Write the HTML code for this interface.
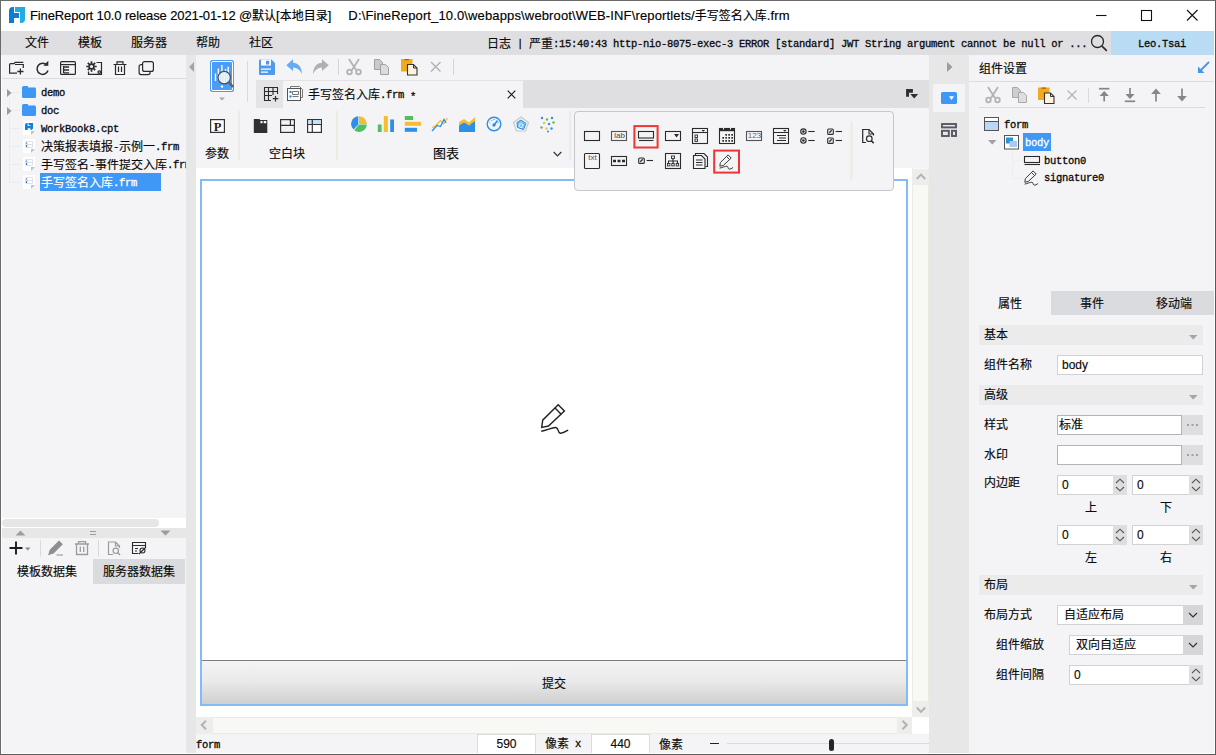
<!DOCTYPE html>
<html lang="zh-CN">
<head>
<meta charset="utf-8">
<title>FineReport 10.0</title>
<style>
html,body{margin:0;padding:0}
body{width:1216px;height:755px;position:relative;overflow:hidden;background:#f4f4f6;
 font-family:"Liberation Sans","Noto Sans CJK SC",sans-serif;font-size:12px;color:#1c1c1c;line-height:1}
.a{position:absolute}
.a svg{display:block}
.t{position:absolute;white-space:nowrap;font-size:12px;line-height:14px;height:14px;color:#0a0a0a;-webkit-text-stroke:0.15px}
.m{font-family:"Liberation Mono","Noto Sans CJK SC",monospace}
.m i,.l{font-family:"Liberation Mono",monospace;font-style:normal;font-size:10.5px;letter-spacing:-0.3px;position:relative;top:-1px;font-weight:normal;-webkit-text-stroke:0.3px}
#ttl .c{font-size:12px;letter-spacing:0}
#t1a{letter-spacing:-0.12px}
#t2{letter-spacing:0.14px}
.hl{background:#3f98f6;color:#fff}
.sec{position:absolute;left:979px;width:224px;height:20px;background:#ebebec}
.inp{position:absolute;background:#fff;border:1px solid #d2d2d4;box-sizing:border-box}
.btn{position:absolute;background:#dedee0}
</style>
</head>
<body>
<!-- ===== title bar ===== -->
<div class="a" id="titlebar" style="left:0;top:0;width:1216px;height:31px;background:#fff">
<svg class="a" style="left:9px;top:7px" width="16" height="16" viewBox="0 0 16 16"><path d="M0 16V4a4 4 0 0 1 4-4h1v6h5v5H5v5z" fill="#0b7dd8"/><path d="M6 0h10v12a4 4 0 0 1-4 4h-1V5H6z" fill="#23abe6"/></svg>
<div class="t" id="ttl" style="left:30px;top:8px;font-size:13px;line-height:16px;height:16px;color:#000"><span id="t1"><span id="t1a">FineReport 10.0 release 2021-01-12 @</span><span class="c">默认</span>[<span class="c">本地目录</span>]</span><span style="display:inline-block;width:17px"></span><span id="t2">D:\FineReport_10.0\webapps\webroot\WEB-INF\reportlets/<span class="c">手写签名入库</span>.frm</span></div>
<svg class="a" style="left:1090px;top:5px" width="116" height="21" viewBox="0 0 116 21" fill="none" stroke="#111" stroke-width="1.1"><path d="M6 10.5h10.5"/><rect x="51.5" y="5.5" width="10" height="10"/><path d="M97 5l10.5 10.5M107.500 5L97 15.500"/></svg>
</div>
<!-- ===== menubar ===== -->
<div class="a" id="menubar" style="left:0;top:31px;width:1216px;height:24px;background:#dfdfe1;z-index:2">
<div class="t" style="left:25px;top:5px">文件</div>
<div class="t" style="left:78px;top:5px">模板</div>
<div class="t" style="left:131px;top:5px">服务器</div>
<div class="t" style="left:196px;top:5px">帮助</div>
<div class="t" style="left:249px;top:5px">社区</div>
<div class="t m" id="log" style="left:487px;top:7px">日志<i>&nbsp;|&nbsp;</i>严重<i>:15:40:43 http-nio-8075-exec-3 ERROR [standard] JWT String argument cannot be null or ...</i></div>
<svg class="a" style="left:1090px;top:3px" width="18" height="18" viewBox="0 0 18 18" fill="none" stroke="#2a2a2a" stroke-width="1.3"><circle cx="7.500" cy="7.500" r="6"/><path d="M11.800 11.800l5 5" stroke-width="1.700"/></svg>
<div class="a" style="left:1111px;top:0;width:104px;height:24px;background:#b9dcf4"></div>
<div class="t m" style="left:1138px;top:7px"><i>Leo.Tsai</i></div>
</div>
<!-- ===== left panel ===== -->
<div class="a" id="left" style="left:0;top:54px;width:186px;height:701px;background:#f4f4f6">
<!-- toolbar icons (coords relative to panel: y-54) -->
<svg class="a" style="left:7px;top:5px" width="150" height="18" viewBox="0 0 150 18" fill="none" stroke="#2b2b2b" stroke-width="1.2">
 <!-- new folder -->
 <path d="M10 14.100H2.600V5.600a1 1 0 0 1 1-1H7l1.200-1.300h8.100"/><path d="M8 5.500h8.300V9"/><path d="M13.400 9.400v6.200M10.300 12.500h6.200" stroke-width="1.300"/>
 <!-- refresh -->
 <path d="M40 6.200A5.600 5.600 0 1 0 41 11.500" stroke-width="1.500"/><path d="M41.300 1.800v4.900h-4.900z" fill="#2b2b2b" stroke="none"/>
 <!-- template tree -->
 <rect x="53.600" y="2.600" width="14.800" height="12.800" rx="1"/><path d="M53.600 5.600h14.800"/><path d="M56.600 7v7M56.600 8h5.500M56.600 11h5.500M56.600 13.800h5.500" stroke-width="1.300"/>
 <!-- gear box -->
 <path d="M81.500 12.500v2.800h13V3.500h-5"/><circle cx="84.500" cy="7.500" r="2.400" stroke-width="1.600"/><path d="M84.500 2.300v2.400M84.500 10.300v2.400M79.300 7.500h2.400M87.300 7.500h2.400M80.800 3.800l1.700 1.700M86.500 9.500l1.700 1.700M80.800 11.200l1.700-1.700M86.500 5.500l1.700-1.700" stroke-width="1.700"/><circle cx="92.300" cy="13.100" r="1.300"/>
 <!-- trash -->
 <path d="M106.500 5.500h13M110 5.500V2.800h6v2.700M108.500 5.500v10h9v-10M111.500 7.500v5.500M114.500 7.500v5.500"/>
 <!-- copy -->
 <rect x="135.600" y="2.600" width="10.800" height="9.800" rx="2"/><path d="M135.500 5.600h-1.400a2 2 0 0 0-2 2v6a2 2 0 0 0 2 2h7a2 2 0 0 0 2-2v-1.200"/>
</svg>
<div class="a" style="left:1px;top:24px;width:185px;height:1px;background:#dcdcde"></div>
<div class="a" style="left:9px;top:44px;width:1px;height:85px;background:#ebebee"></div>
<div class="a" style="left:9px;top:38px;width:11px;height:1px;background:#ebebee"></div>
<div class="a" style="left:9px;top:56px;width:11px;height:1px;background:#ebebee"></div>
<div class="a" style="left:9px;top:74px;width:11px;height:1px;background:#ebebee"></div>
<div class="a" style="left:9px;top:92px;width:11px;height:1px;background:#ebebee"></div>
<div class="a" style="left:9px;top:110px;width:11px;height:1px;background:#ebebee"></div>
<div class="a" style="left:9px;top:128px;width:11px;height:1px;background:#ebebee"></div>
<!-- tree -->
<svg class="a" style="left:7px;top:35px" width="5" height="8"><path d="M0 0l4.500 4L0 8z" fill="#9a9a9a"/></svg>
<svg class="a" style="left:7px;top:53px" width="5" height="8"><path d="M0 0l4.500 4L0 8z" fill="#9a9a9a"/></svg>
<svg class="a" style="left:22px;top:32px" width="14" height="12"><path d="M0 1.500A1.500 1.500 0 0 1 1.500 0h4l1.500 1.500h5.500A1.500 1.500 0 0 1 14 3v7.500a1.500 1.500 0 0 1-1.500 1.500h-11A1.500 1.500 0 0 1 0 10.500z" fill="#3f97f5"/><path d="M6 1.500h7" stroke="#8cc3fb" stroke-width="1"/></svg>
<svg class="a" style="left:22px;top:50px" width="14" height="12"><path d="M0 1.500A1.500 1.500 0 0 1 1.500 0h4l1.500 1.500h5.500A1.500 1.500 0 0 1 14 3v7.500a1.500 1.500 0 0 1-1.500 1.500h-11A1.500 1.500 0 0 1 0 10.500z" fill="#3f97f5"/><path d="M6 1.500h7" stroke="#8cc3fb" stroke-width="1"/></svg>
<div class="t m" style="left:41px;top:33px"><i>demo</i></div>
<div class="t m" style="left:41px;top:51px"><i>doc</i></div>
<svg class="a" style="left:23px;top:67px" width="12" height="14"><path d="M0 0h12v10l-4 4H0z" fill="#fff"/><path d="M12 10l-4 4v-4z" fill="#c2c2c4"/><path d="M2 9V4a2 2 0 0 1 2-2h.700v3h2.600v2.200H4.700V9zM5.500 2H10v5a2 2 0 0 1-2 2h-.600V4.300H5.500z" fill="#0f80da"/></svg>
<div class="t m" style="left:41px;top:69px"><i>WorkBook8.cpt</i></div>
<svg class="a" style="left:23px;top:85px" width="12" height="14"><path d="M0 0h12v10l-4 4H0z" fill="#fff"/><path d="M12 10l-4 4v-4z" fill="#c2c2c4"/><path d="M2.500 2.500h7v6h-7zM2.500 5.500h7" stroke="#e0e0e3" stroke-width="1" fill="none"/><path d="M3 3.500h1.200v1.200H3zM3 6h1.200v2H3z" fill="#2b83e8"/></svg>
<div class="t m" style="left:41px;top:87px">决策报表填报<i>-</i>示例一<i>.frm</i></div>
<svg class="a" style="left:23px;top:103px" width="12" height="14"><path d="M0 0h12v10l-4 4H0z" fill="#fff"/><path d="M12 10l-4 4v-4z" fill="#c2c2c4"/><path d="M2.500 2.500h7v6h-7zM2.500 5.500h7" stroke="#e0e0e3" stroke-width="1" fill="none"/><path d="M3 3.500h1.200v1.200H3zM3 6h1.200v2H3z" fill="#2b83e8"/></svg>
<div class="t m" style="left:41px;top:105px;width:145px;overflow:hidden">手写签名<i>-</i>事件提交入库<i>.frm</i></div>
<svg class="a" style="left:23px;top:121px" width="12" height="14"><path d="M0 0h12v10l-4 4H0z" fill="#fff"/><path d="M12 10l-4 4v-4z" fill="#c2c2c4"/><path d="M2.500 2.500h7v6h-7zM2.500 5.500h7" stroke="#e0e0e3" stroke-width="1" fill="none"/><path d="M3 3.500h1.200v1.200H3zM3 6h1.200v2H3z" fill="#2b83e8"/></svg>
<div class="a hl" style="left:40px;top:119px;width:121px;height:18px"></div>
<div class="t m" style="left:41px;top:123px;color:#fff">手写签名入库<i>.frm</i></div>
<!-- h scrollbar -->
<div class="a" style="left:1px;top:464px;width:185px;height:10px;background:#fff"></div>
<div class="a" style="left:2px;top:465px;width:157px;height:8px;border-radius:4px;background:#e6e6e7"></div>
<!-- splitter -->
<div class="a" style="left:1px;top:474px;width:185px;height:10px;background:#e7e7e8"></div>
<svg class="a" style="left:15px;top:476px" width="160" height="6"><path d="M0.500 5.500l5-5 5 5zM145.500 0.500h10l-5 5z" fill="#9c9c9c"/><path d="M75 1.500h6M75 4.500h6" stroke="#9c9c9c" stroke-width="1"/></svg>
<!-- dataset toolbar -->
<svg class="a" style="left:7px;top:485px" width="142" height="18" viewBox="0 0 142 18" fill="none">
 <path d="M9 2.500v13M2.500 9h13" stroke="#1c1c1c" stroke-width="1.900"/><path d="M18 8.500h5.500L20.750 11.500z" fill="#8a8a8a"/>
 <path d="M33.500 1.500v16M91.500 1.500v16" stroke="#d8d8da" stroke-width="1"/>
 <path d="M42 15.300l1.300-4.300 8.700-8.700 3 3-8.700 8.700zM49.500 16h6.500" stroke="#8e8e90" stroke-width="1.200" fill="#8e8e90"/>
 <path d="M68 5h14M71.500 5V2.700h7V5M69.500 5v10.500h11V5M73.300 7.500v5.500M76.700 7.500v5.500" stroke="#9c9c9e" stroke-width="1.300"/>
 <path d="M112.500 9V7l-4-4h-7v12.500h4.500M108.500 3v4h4" stroke="#9a9a9c" stroke-width="1.200"/><circle cx="108.800" cy="11.800" r="2.700" stroke="#9a9a9c" stroke-width="1.200"/><path d="M110.800 13.800l2.200 2.200" stroke="#9a9a9c" stroke-width="1.400"/>
 <path d="M138.500 8V3.500h-13v11h6M125.500 6.500h13M128 9.500h3M128 12h2" stroke="#2b2b2b" stroke-width="1.100"/><circle cx="135.500" cy="11.500" r="2.500" stroke="#2b2b2b" stroke-width="1.100"/><path d="M132 15l7-7" stroke="#2b2b2b" stroke-width="1.100"/>
</svg>
<!-- dataset tabs -->
<div class="a" style="left:93px;top:505px;width:92px;height:25px;background:#dadbde"></div>
<div class="t" style="left:17px;top:511px">模板数据集</div>
<div class="t" style="left:103px;top:511px">服务器数据集</div>
</div>
<!-- splitter -->
<div class="a" id="split" style="left:186px;top:54px;width:10px;height:701px;background:#e7e7e8"><svg class="a" style="left:3px;top:8px" width="5" height="10"><path d="M5 0v10L0 5z" fill="#a4a4a6"/></svg></div>
<!-- ===== centre ===== -->
<div class="a" id="centre" style="left:196px;top:54px;width:733px;height:701px;background:#f4f4f6">
<!-- big icon -->
<svg class="a" style="left:14px;top:6px" width="26" height="44" viewBox="0 0 26 44">
 <rect x="0" y="0" width="24" height="32" rx="2.500" fill="#4a9cf5"/><rect x="1.500" y="1.500" width="21" height="29" rx="1.500" fill="none" stroke="#fff" stroke-width="1"/>
 <path d="M5.500 13.500V21M8.400 8.400V20M11.900 5v17M15.500 9v11M18.200 6.700V19" stroke="#fff" stroke-width="1.400"/><circle cx="12" cy="26.500" r="1.200" fill="#fff"/>
 <circle cx="14.200" cy="17.600" r="6.200" fill="#f2f7fd" stroke="#4a4e55" stroke-width="1.300"/><path d="M10.500 14v7M12.800 12.500v10M15.500 12.500v10M17.800 14v7" stroke="#d4e6fb" stroke-width="1.200"/><path d="M19 22.500l3.600 3.800" stroke="#5d6168" stroke-width="2.400" stroke-linecap="round"/>
 <path d="M9 37.500h6L12 40.500z" fill="#a8a8aa"/>
</svg>
<div class="a" style="left:51px;top:7px;width:1px;height:41px;background:#dadadc"></div>
<!-- file toolbar -->
<svg class="a" style="left:60px;top:3px" width="200" height="20" viewBox="0 0 200 20" fill="none">
 <path d="M4.200 2.500h11.300l3.500 3.500v10.800a1.200 1.200 0 0 1-1.200 1.200H4.200A1.200 1.200 0 0 1 3 16.800V3.700a1.200 1.200 0 0 1 1.200-1.200z" fill="#4f9aec"/><rect x="5" y="2.500" width="10" height="6" fill="#fff"/><rect x="10" y="3.800" width="3.200" height="3.700" fill="#4f9aec"/><path d="M5 12.200h10M5 15.200h7" stroke="#fff" stroke-width="1.300"/>
 <path d="M30.300 8.200L37 2.200V5.800C42 6 45.500 9.500 46 17 44 13 41 10.800 37 10.500V14z" fill="#67acf3"/>
 <path d="M72.800 8.200L66 2.200V5.800C61 6 57.500 9.500 57 17 59 13 62 10.800 66 10.500V14z" fill="#b0b0b2"/>
 <path d="M82.500 2v16M197.500 2v16" stroke="#d6d6d8" stroke-width="1"/>
 <g transform="translate(0,-1)">
 <g stroke="#b2b2b4" stroke-width="1.800"><path d="M93 3l7 11M103 3l-7 11"/><circle cx="93.500" cy="16" r="2.300"/><circle cx="102.500" cy="16" r="2.300"/></g>
 <g stroke="#a0a0a2" stroke-width="1" fill="#c9c9cb"><path d="M118.500 3.500h5l3 3v7h-8z"/><path d="M124.500 8.500h5l3 3v7h-8z" fill="#dcdcde"/></g>
 <rect x="145" y="3" width="11.500" height="12.500" fill="#f2a91c"/><rect x="148.500" y="3" width="4.500" height="1.200" fill="#b4542a"/><path d="M151.500 8.500h6l3.500 3.500V19h-9.500z" fill="#fff4de" stroke="#333" stroke-width="1.100"/><path d="M157.500 8.500v3.500h3.500" stroke="#333" stroke-width="1" fill="none"/>
 <path d="M175 6l9.500 9.500M184.500 6L175 15.500" stroke="#b0b0b2" stroke-width="1.400"/></g>
</svg>
<!-- tab row -->
<div class="a" style="left:60px;top:26px;width:673px;height:28px;background:#dfdfe1"></div>
<div class="a" style="left:60px;top:26px;width:27px;height:28px;background:#e4e4e6"></div>
<div class="a" style="left:87px;top:26px;width:240px;height:28px;background:#f4f4f6"></div>
<div class="a" style="left:60px;top:26px;width:267px;height:1px;background:#e2e2e4"></div>
<svg class="a" style="left:67px;top:32px" width="16" height="16" viewBox="0 0 16 16" fill="none" stroke="#2b2b2b" stroke-width="1.100"><path d="M14.500 8V1.500h-13v13H8M1.500 5.500h13M1.500 9.500H9M5.500 1.500v13M10 1.500V9"/><path d="M12.500 10v5.500M9.800 12.700h5.500" stroke-width="1.200"/></svg>
<svg class="a" style="left:91px;top:32px" width="16" height="16" viewBox="0 0 16 16" fill="none"><path d="M3.500 2.500v-2h9l3 3v8h-2" stroke="#777" stroke-width="1"/><rect x=".5" y="2.500" width="13" height="12" fill="#fafafa" stroke="#555" stroke-width="1"/><path d="M5.500 5.500h6v3h-6zM5.500 10.500h6" stroke="#777" stroke-width="1"/><path d="M2.500 5h2v2h-2zM2.500 9.500h2v2h-2z" fill="#2b7de0"/></svg>
<div class="t m" style="left:112px;top:35px">手写签名入库<i>.frm <span style="position:relative;top:2px">*</span></i></div>
<svg class="a" style="left:311px;top:36px" width="9" height="9"><path d="M.7.700l7.600 7.600M8.300.700L.7 8.300" stroke="#1c1c1c" stroke-width="1.200"/></svg>
<svg class="a" style="left:709px;top:34px" width="14" height="12"><path d="M1.100 1.100h6.800v3.600H4v4H1.100z" fill="#2e2e2e"/><path d="M5.300 6.100h7.800l-3.900 4.500z" fill="#2e2e2e"/></svg>
<!-- widget toolbar -->
<svg class="a" style="left:14px;top:64px" width="16" height="16" viewBox="0 0 16 16"><rect x=".6" y="1.600" width="13.800" height="12.800" fill="#fff" stroke="#333" stroke-width="1.200"/><text x="7.500" y="12.500" text-anchor="middle" font-family="Liberation Serif,serif" font-weight="bold" font-size="12.500" fill="#222">P</text></svg>
<div class="t" style="left:9px;top:93px">参数</div>
<div class="a" style="left:42px;top:57px;width:2px;height:49px;background:#eceae2"></div>
<svg class="a" style="left:57px;top:64px" width="72" height="16" viewBox="0 0 72 16" fill="none">
 <path d="M.8 1h6v1h7.500v13H.8z" fill="#303030"/><path d="M7.500 3h2v2.300h-2zM10.700 3h2.600v2.300h-2.600z" fill="#fff"/>
 <rect x="27.600" y="1.600" width="13.800" height="12.800" stroke="#333" stroke-width="1.200"/><path d="M27.600 7.300h13.800M37.400 1.600v5.700" stroke="#333" stroke-width="1.200"/>
 <rect x="54.600" y="1.600" width="13.800" height="12.800" fill="#fff" stroke="#333" stroke-width="1.200"/><rect x="55.200" y="2.200" width="12.600" height="3.800" fill="#bfe4f7"/><path d="M54.600 6.500h13.800M59.300 1.600v12.800" stroke="#333" stroke-width="1.200"/>
</svg>
<div class="t" style="left:73px;top:93px">空白块</div>
<div class="a" style="left:140px;top:57px;width:2px;height:49px;background:#eceae2"></div>
<!-- chart icons -->
<svg class="a" style="left:154px;top:60px" width="210" height="20" viewBox="0 0 210 20" fill="none">
 <path d="M9 2.200A7.800 7.800 0 0 1 16.800 10H9z" fill="#f5bd31"/><path d="M16.800 10.600A7.800 7.800 0 0 1 4.200 16.200L9 10.600z" fill="#52c05a"/><path d="M8.300 2.200v8.200L3.600 15.600A7.800 7.800 0 0 1 8.300 2.200z" fill="#2c8fe8"/>
 <path d="M27.800 10.500h3.800V18h-3.800z" fill="#52c05a"/><path d="M33.800 2h4v16h-4z" fill="#f5bd31"/><path d="M40.200 5.500h3.800V18h-3.800z" fill="#2c8fe8"/>
 <path d="M54.800 2h8.200v4h-8.200z" fill="#52c05a"/><path d="M54.800 7.800H71v4H54.800z" fill="#f5bd31"/><path d="M54.800 13.800H67v4H54.800z" fill="#2c8fe8"/>
 <path d="M82 13.500l4-2 4.500-5 3 3.500L97.500 4" stroke="#f5bd31" stroke-width="1.300"/><path d="M82 17l5-5.500 3.500 1L94 5.500l2 3.500" stroke="#2c8fe8" stroke-width="1.300"/>
 <path d="M109 8l5-3 5 3.500 6-5.500v8h-16z" fill="#f5bd31"/><path d="M109 11.500l5-3 5 3 6-4.500v11h-16z" fill="#2c8fe8"/>
 <circle cx="144" cy="10" r="6.800" stroke="#2c8fe8" stroke-width="1.400"/><circle cx="144" cy="11" r="1.700" fill="#2c8fe8"/><path d="M144.500 10.500l3-4" stroke="#2c8fe8" stroke-width="1.500"/><path d="M139.500 8.500l.8.500M141.500 6l.5.800M144 5v1M148.500 8.500l-.8.500" stroke="#2c8fe8" stroke-width="1"/>
 <path d="M171 3l7.500 5.500-3 8.500h-9l-3-8.500z" stroke="#c9c9cb" stroke-width="1.200"/><path d="M171 6l5 3.500-2.500 6-6-2-.5-5z" fill="#7cc4f3" stroke="#2c8fe8" stroke-width="1"/><path d="M171 9.500l2 1.500-1 2.500h-2l-1-2.500z" stroke="#fff" stroke-width=".7"/>
 <g><circle cx="192" cy="4" r="1.200" fill="#2c8fe8"/><circle cx="197" cy="5.500" r="1.200" fill="#52c05a"/><circle cx="202" cy="4" r="1.200" fill="#2c8fe8"/><circle cx="194" cy="9" r="1.200" fill="#f5bd31"/><circle cx="199" cy="10" r="1.200" fill="#2c8fe8"/><circle cx="203.500" cy="8.500" r="1.200" fill="#52c05a"/><circle cx="191.500" cy="13.500" r="1.200" fill="#52c05a"/><circle cx="196.500" cy="14.500" r="1.200" fill="#f5bd31"/><circle cx="201.500" cy="14.500" r="1.200" fill="#2c8fe8"/><circle cx="198" cy="17.500" r="1" fill="#2c8fe8"/></g>
</svg>
<div class="t" style="left:237px;top:93px;font-size:13px">图表</div>
<svg class="a" style="left:357px;top:97px" width="9" height="7"><path d="M.7 1l3.800 4L8.300 1" fill="none" stroke="#333" stroke-width="1.200"/></svg>
<div class="a" style="left:373px;top:57px;width:2px;height:49px;background:#eceae2"></div>
<!-- design area -->
<div class="a" style="left:0;top:114px;width:716px;height:550px;background:#fff"></div>
<div class="a" style="left:4px;top:125px;width:708px;height:527px;box-sizing:border-box;border:2px solid #84bbf7;background:#fff"></div>
<div class="a" style="left:6px;top:606px;width:704px;height:44px;background:linear-gradient(#f4f4f4,#eaeaea 45%,#cfcfd0);border-top:1px solid #7d7d7d;box-sizing:border-box"></div>
<div class="t" style="left:346px;top:623px">提交</div>
<svg class="a" style="left:344px;top:349px" width="30" height="32" viewBox="0 0 30 32" fill="none" stroke="#222" stroke-width="1.400" stroke-linejoin="miter"><path d="M18.200 1.800l6.200 6.300L8.500 23 1.700 24.400l1-7.200z"/><path d="M15 5l6.200 6.200"/><path d="M1.200 28.200c6-1 11-4 14.500-3.700 3.500.5 1.500 5 4.500 5.700 2.500.4 5-1.400 8-3.200"/></svg>
<!-- v scrollbar -->
<div class="a" style="left:716px;top:114px;width:17px;height:549px;background:#f8f8f5;border-left:1px solid #ece9dd;border-right:1px solid #ece9dd;box-sizing:border-box"></div>
<div class="a" style="left:716px;top:115px;width:17px;height:16px;background:#ededeb"></div>
<div class="a" style="left:716px;top:647px;width:17px;height:16px;background:#ededeb"></div>
<svg class="a" style="left:720px;top:119px" width="10" height="8"><path d="M.8 6l4.200-4.300L9.200 6" fill="none" stroke="#b2b2b2" stroke-width="1.900"/></svg>
<svg class="a" style="left:720px;top:652px" width="10" height="8"><path d="M.8 1.500l4.200 4.300 4.200-4.300" fill="none" stroke="#b2b2b2" stroke-width="1.900"/></svg>
<!-- h scrollbar -->
<div class="a" style="left:0;top:663px;width:716px;height:17px;background:#f8f8f5;border-top:1px solid #ece9dd;border-bottom:1px solid #ece9dd;box-sizing:border-box"></div>
<div class="a" style="left:0;top:663px;width:17px;height:17px;background:#ededeb"></div>
<div class="a" style="left:701px;top:663px;width:15px;height:17px;background:#ededeb"></div>
<div class="a" style="left:716px;top:663px;width:17px;height:17px;background:#fff"></div>
<svg class="a" style="left:4px;top:666px" width="8" height="10"><path d="M6 .8L1.700 5 6 9.200" fill="none" stroke="#b2b2b2" stroke-width="1.900"/></svg>
<svg class="a" style="left:705px;top:666px" width="8" height="10"><path d="M1.500 .8L5.800 5 1.500 9.200" fill="none" stroke="#b2b2b2" stroke-width="1.900"/></svg>
<!-- status row -->
<div class="t m" style="left:0px;top:685px"><i>form</i></div>
<div class="inp" style="left:281px;top:680px;width:59px;height:21px;border-color:#dcdcde"></div>
<div class="t" style="left:281px;top:683px;width:59px;text-align:center">590</div>
<div class="t m" style="left:349px;top:684px">像素<i>&nbsp;x</i></div>
<div class="inp" style="left:395px;top:680px;width:59px;height:21px;border-color:#dcdcde"></div>
<div class="t" style="left:395px;top:683px;width:59px;text-align:center">440</div>
<div class="t" style="left:463px;top:684px">像素</div>
<div class="a" style="left:514px;top:689px;width:9px;height:1px;background:#222"></div>
<div class="a" style="left:531px;top:689px;width:202px;height:1px;background:#dadadc"></div>
<div class="a" style="left:633px;top:685px;width:5px;height:12px;border-radius:2.500px;background:#262626"></div>
</div>
<!-- strip -->
<div class="a" id="strip" style="left:929px;top:54px;width:40px;height:701px;background:#e7e7e8">
<svg class="a" style="left:18px;top:8px" width="6" height="10"><path d="M0 0l5.500 5L0 10z" fill="#9c9c9e"/></svg>
<div class="a" style="left:4px;top:30px;width:32px;height:28px;background:#f4f4f6"></div>
<svg class="a" style="left:12px;top:38px" width="16" height="12"><rect width="16" height="12" rx="1.500" fill="#3f97f5"/><path d="M8 4.200h5L10.500 8z" fill="#fff"/></svg>
<svg class="a" style="left:12px;top:69px" width="16" height="14" fill="none" stroke="#575863" stroke-width="1.900"><rect x="1" y="1" width="14" height="3.400"/><rect x="1" y="7.800" width="6.800" height="5.200"/><rect x="11" y="7.800" width="4" height="5.200"/></svg>
</div>
<!-- ===== right panel ===== -->
<div class="a" id="right" style="left:969px;top:54px;width:247px;height:701px;background:#f4f4f6">
<div class="t" style="left:10px;top:8px">组件设置</div>
<svg class="a" style="left:228px;top:7px" width="13" height="13"><path d="M12 1L2.500 10.500" stroke="#3f97f5" stroke-width="1.800"/><path d="M1 5.500V12h6.500z" fill="#3f97f5"/></svg>
<div class="a" style="left:0;top:27px;width:246px;height:1px;background:#dcdcde"></div>
<!-- toolbar -->
<svg class="a" style="left:14px;top:31px" width="210" height="20" viewBox="0 0 210 20" fill="none">
 <g stroke="#b2b2b4" stroke-width="1.800"><path d="M5 2l7 11M15 2L8 13"/><circle cx="5.500" cy="15" r="2.300"/><circle cx="14.500" cy="15" r="2.300"/></g>
 <g stroke="#a8a8aa" stroke-width="1" fill="#cdcdcf"><path d="M29.500 2.500h5l3 3v7h-8z"/><path d="M35.500 7.500h5l3 3v7h-8z" fill="#dededf"/></g>
 <rect x="55" y="2.500" width="11.500" height="12.500" fill="#f2a91c"/><rect x="58.500" y="2.500" width="4.500" height="1.200" fill="#b4542a"/><path d="M61.500 8h6l3.500 3.500V18.500h-9.500z" fill="#fff4de" stroke="#333" stroke-width="1.100"/><path d="M67.500 8v3.500h3.500" stroke="#333" stroke-width="1" fill="none"/>
 <path d="M84.500 5.500l9 9M93.500 5.500l-9 9" stroke="#b4b4b6" stroke-width="1.300"/>
 <path d="M105.500 3v15" stroke="#dadadc" stroke-width="1"/>
 <g stroke="#85858a" stroke-width="1.700" fill="#85858a"><path d="M116 3.700h10.400"/><path d="M121.200 16.500V10"/><path d="M121.200 6l4.600 5h-9.200z" stroke="none"/>
 <path d="M141.800 16.300h10.400"/><path d="M147 3v6"/><path d="M147 14l4.600-5h-9.200z" stroke="none"/>
 <path d="M173 16.500V8"/><path d="M173 3.500l4.800 5.500h-9.600z" stroke="none"/>
 <path d="M199 3.500V12"/><path d="M199 16.500l4.800-5.500h-9.600z" stroke="none"/></g>
</svg>
<div class="a" style="left:10px;top:53px;width:226px;height:1px;background:#dcdcde"></div>
<!-- tree -->
<svg class="a" style="left:15px;top:63px" width="16" height="14"><rect x=".5" y=".5" width="14" height="13" fill="#bcd6f5" stroke="#555" stroke-width="1"/><rect x="1" y="1" width="13" height="3.500" fill="#fff"/><path d="M.5 4.500h14" stroke="#555"/></svg>
<div class="t m" style="left:35px;top:65px"><i>form</i></div>
<div class="a" style="left:23px;top:79px;width:1px;height:10px;background:#eeeef0"></div>
<div class="a" style="left:23px;top:88px;width:10px;height:1px;background:#eeeef0"></div>
<svg class="a" style="left:19px;top:86px" width="9" height="5"><path d="M0 0h8.500L4.250 4.500z" fill="#a2a2a4"/></svg>
<svg class="a" style="left:35px;top:81px" width="16" height="15"><rect x=".5" y=".5" width="14" height="13.500" fill="#fff" stroke="#555"/><rect x="2" y="2.500" width="7" height="6" fill="#2f8fd8"/><rect x="5.500" y="6" width="7.500" height="6" fill="#a9c9f0"/></svg>
<div class="a hl" style="left:54px;top:79px;width:28px;height:18px"></div>
<div class="t m" style="left:56px;top:83px;color:#fff"><i>body</i></div>
<div class="a" style="left:43px;top:97px;width:1px;height:28px;background:#eeeef0"></div>
<div class="a" style="left:43px;top:106px;width:10px;height:1px;background:#eeeef0"></div>
<div class="a" style="left:43px;top:124px;width:10px;height:1px;background:#eeeef0"></div>
<svg class="a" style="left:54px;top:101px" width="18" height="11" fill="none" stroke="#2b2b2b" stroke-width="1.100"><rect x="1.500" y="1.500" width="15" height="6"/><path d="M1.500 9.500h15.500"/></svg>
<div class="t m" style="left:75px;top:101px"><i>button0</i></div>
<svg class="a" style="left:55px;top:116px" width="15" height="16" viewBox="0 0 30 32" fill="none" stroke="#333" stroke-width="1.900"><path d="M18.200 1.800l6.200 6.300L8.500 23 1.700 24.400l1-7.200z"/><path d="M15 5l6.200 6.200" stroke-width="1.800"/><path d="M1.200 28.200c6-1 11-4 14.500-3.700 3.500.5 1.500 5 4.500 5.700 2.500.4 5-1.400 8-3.200"/></svg>
<div class="t m" style="left:75px;top:118px"><i>signature0</i></div>
<!-- property tabs -->
<div class="a" style="left:82px;top:237px;width:164px;height:24px;background:#dadbde"></div>
<div class="t" style="left:29px;top:243px">属性</div>
<div class="t" style="left:111px;top:243px">事件</div>
<div class="t" style="left:187px;top:243px">移动端</div>
<!-- properties -->
<div class="sec" style="left:10px;top:271px"></div>
<div class="t" style="left:15px;top:274px">基本</div>
<svg class="a" style="left:220px;top:281px" width="9" height="5"><path d="M0 0h8.500L4.250 4.500z" fill="#a4a4a6"/></svg>
<div class="t" style="left:15px;top:304px">组件名称</div>
<div class="inp" style="left:88px;top:301px;width:146px;height:20px;border-color:#d2d2d4"></div>
<div class="t" style="left:93px;top:304px">body</div>
<div class="sec" style="left:10px;top:331px"></div>
<div class="t" style="left:15px;top:334px">高级</div>
<svg class="a" style="left:220px;top:341px" width="9" height="5"><path d="M0 0h8.500L4.250 4.500z" fill="#a4a4a6"/></svg>
<div class="t" style="left:15px;top:364px">样式</div>
<div class="inp" style="left:88px;top:361px;width:125px;height:20px;border-color:#b4b4b6"></div>
<div class="t" style="left:90px;top:364px">标准</div>
<div class="btn" style="left:213px;top:361px;width:21px;height:20px"></div>
<svg class="a" style="left:218px;top:370px" width="11" height="2"><path d="M0 1h2M4.500 1h2M9 1h2" stroke="#8a8a8c" stroke-width="1.300"/></svg>
<div class="t" style="left:15px;top:394px">水印</div>
<div class="inp" style="left:88px;top:391px;width:125px;height:20px;border-color:#b4b4b6"></div>
<div class="btn" style="left:213px;top:391px;width:21px;height:20px"></div>
<svg class="a" style="left:218px;top:400px" width="11" height="2"><path d="M0 1h2M4.500 1h2M9 1h2" stroke="#8a8a8c" stroke-width="1.300"/></svg>
<div class="t" style="left:15px;top:422px">内边距</div>
<div class="inp" style="left:88px;top:421px;width:70px;height:20px"></div>
<div class="btn" style="left:144px;top:421px;width:14px;height:20px"></div>
<svg class="a" style="left:146px;top:424px" width="10" height="14" fill="none" stroke="#555" stroke-width="1.100"><path d="M1 5l4-3.800L9 5M1 9l4 3.800L9 9"/></svg>
<div class="t" style="left:93px;top:424px">0</div>
<div class="inp" style="left:163px;top:421px;width:71px;height:20px"></div>
<div class="btn" style="left:220px;top:421px;width:14px;height:20px"></div>
<svg class="a" style="left:222px;top:424px" width="10" height="14" fill="none" stroke="#555" stroke-width="1.100"><path d="M1 5l4-3.800L9 5M1 9l4 3.800L9 9"/></svg>
<div class="t" style="left:168px;top:424px">0</div>
<div class="t" style="left:116px;top:447px">上</div>
<div class="t" style="left:191px;top:447px">下</div>
<div class="inp" style="left:88px;top:471px;width:70px;height:20px"></div>
<div class="btn" style="left:144px;top:471px;width:14px;height:20px"></div>
<svg class="a" style="left:146px;top:474px" width="10" height="14" fill="none" stroke="#555" stroke-width="1.100"><path d="M1 5l4-3.800L9 5M1 9l4 3.800L9 9"/></svg>
<div class="t" style="left:93px;top:474px">0</div>
<div class="inp" style="left:163px;top:471px;width:71px;height:20px"></div>
<div class="btn" style="left:220px;top:471px;width:14px;height:20px"></div>
<svg class="a" style="left:222px;top:474px" width="10" height="14" fill="none" stroke="#555" stroke-width="1.100"><path d="M1 5l4-3.800L9 5M1 9l4 3.800L9 9"/></svg>
<div class="t" style="left:168px;top:474px">0</div>
<div class="t" style="left:116px;top:497px">左</div>
<div class="t" style="left:191px;top:497px">右</div>
<div class="sec" style="left:10px;top:521px"></div>
<div class="t" style="left:15px;top:524px">布局</div>
<svg class="a" style="left:220px;top:531px" width="9" height="5"><path d="M0 0h8.500L4.250 4.500z" fill="#a4a4a6"/></svg>
<div class="t" style="left:15px;top:554px">布局方式</div>
<div class="inp" style="left:88px;top:551px;width:146px;height:20px"></div>
<div class="btn" style="left:214px;top:551px;width:20px;height:20px;background:#d6d6d9"></div>
<svg class="a" style="left:219px;top:558px" width="10" height="7" fill="none" stroke="#333" stroke-width="1.200"><path d="M1 1l4 4 4-4"/></svg>
<div class="t" style="left:95px;top:554px">自适应布局</div>
<div class="t" style="left:27px;top:584px">组件缩放</div>
<div class="inp" style="left:100px;top:581px;width:134px;height:20px"></div>
<div class="btn" style="left:214px;top:581px;width:20px;height:20px;background:#d6d6d9"></div>
<svg class="a" style="left:219px;top:588px" width="10" height="7" fill="none" stroke="#333" stroke-width="1.200"><path d="M1 1l4 4 4-4"/></svg>
<div class="t" style="left:107px;top:584px">双向自适应</div>
<div class="t" style="left:27px;top:614px">组件间隔</div>
<div class="inp" style="left:100px;top:611px;width:134px;height:20px"></div>
<div class="btn" style="left:220px;top:611px;width:14px;height:20px"></div>
<svg class="a" style="left:222px;top:614px" width="10" height="14" fill="none" stroke="#555" stroke-width="1.100"><path d="M1 5l4-3.800L9 5M1 9l4 3.800L9 9"/></svg>
<div class="t" style="left:105px;top:614px">0</div>
</div>
<!-- ===== widget popup ===== -->
<div class="a" id="popup" style="left:574px;top:111px;width:320px;height:80px;box-sizing:border-box;border:1px solid #c6c6cc;border-radius:4px;background:#f4f4f6">
<!-- coords inside: page x-575, y-111 -->
<svg class="a" style="left:0;top:-1px" width="317" height="79" viewBox="0 0 317 79" fill="none" stroke="#2b2b2b" stroke-width="1.100">
 <!-- row1 centre y=25 ; icon centres x = 17,44,71,98,125,152,179,206,233,260 ; preview 293 -->
 <rect x="9.500" y="20.500" width="15" height="9"/>
 <rect x="36.500" y="20.500" width="15" height="9" stroke="#555"/>
 <rect x="59.400" y="15.100" width="23.200" height="21.400" stroke="#ee3535" stroke-width="2"/>
 <rect x="63.500" y="20.500" width="15" height="6.500"/><path d="M64 29.500h14.500"/>
 <rect x="90.500" y="20.500" width="15" height="9"/><path d="M99 23h5l-2.500 3.500z" fill="#2b2b2b" stroke="none"/>
 <rect x="117.500" y="17.500" width="15" height="15"/><path d="M117.500 21.500h15"/><path d="M126.500 19h3.600l-1.800 1.800z" fill="#2b2b2b" stroke="none"/><rect x="120" y="24" width="2.500" height="2.500" stroke-width=".9"/><rect x="120" y="28" width="2.500" height="2.500" stroke-width=".9"/>
 <rect x="144.500" y="17.500" width="15" height="15"/><path d="M144.500 19h15" stroke-width="2.400"/><path d="M148.500 17v1.500M155.500 17v1.500" stroke="#f4f4f6" stroke-width="1"/><g fill="#2b2b2b" stroke="none"><rect x="150.3" y="23" width="1.700" height="1.700"/><rect x="153.3" y="23" width="1.700" height="1.700"/><rect x="156.3" y="23" width="1.700" height="1.700"/><rect x="147.3" y="26" width="1.700" height="1.700"/><rect x="150.3" y="26" width="1.700" height="1.700"/><rect x="153.3" y="26" width="1.700" height="1.700"/><rect x="156.3" y="26" width="1.700" height="1.700"/><rect x="147.3" y="29" width="1.700" height="1.700"/><rect x="150.3" y="29" width="1.700" height="1.700"/><rect x="153.3" y="29" width="1.700" height="1.700"/><rect x="156.3" y="29" width="1.700" height="1.700"/></g>
 <rect x="171.500" y="20.500" width="15" height="9" stroke="#555"/>
 <rect x="198.500" y="17.500" width="15" height="15"/><path d="M198.500 21.500h15M202 24.500h9M204 27h7M202 29.500h9" stroke-width="1"/><path d="M208 19h3.600l-1.800 1.800z" fill="#2b2b2b" stroke="none"/>
 <circle cx="228.400" cy="20.600" r="2.700"/><circle cx="228.400" cy="20.600" r="1.300" fill="#2b2b2b" stroke="none"/><path d="M233.300 20.500h6.400"/><circle cx="228.400" cy="29.500" r="2.700"/><circle cx="228.400" cy="29.500" r="1.300" fill="#2b2b2b" stroke="none"/><path d="M233.300 29.500h6.400"/>
 <rect x="252.700" y="18" width="5.600" height="5.400" rx="1"/><path d="M254.300 21.800l2.400-2.600" stroke-width="1.300"/><path d="M260.600 20.500h6.400"/><rect x="252.700" y="27" width="5.600" height="5.400" rx="1"/><path d="M254.300 30.800l2.400-2.600" stroke-width="1.300"/><path d="M260.600 29.500h6.400"/>
 <path d="M276.500 10v59" stroke="#eceae2" stroke-width="2"/>
 <path d="M298.500 24.500V23l-4.500-4.500h-6.300v13h3.300" stroke="#2b2b2b" stroke-width="1.200"/><path d="M294 18.500v4.500h4.500"/><circle cx="294.300" cy="27.700" r="2.800" stroke-width="1.200"/><path d="M296.300 29.700l2.400 2.400" stroke-width="1.500"/>
 <!-- row2 centre y=50 -->
 <rect x="9.500" y="42.500" width="15" height="15" rx="1"/>
 <rect x="36.500" y="45.500" width="15" height="9"/><path d="M38 50h12" stroke-width="2.600" stroke-dasharray="3 1.500"/>
 <rect x="63.700" y="47" width="5.600" height="5.400" rx="1"/><path d="M65.300 50.800l2.400-2.600" stroke-width="1.300"/><path d="M71.600 49.500h6.400"/>
 <rect x="90.500" y="42.500" width="15" height="15"/><rect x="96.500" y="45" width="3" height="2.500" stroke-width=".9"/><path d="M98 47.500v2.500M93.500 52.500v-2.500h9v2.500M98 50v2.500"/><rect x="92.500" y="52.500" width="2.400" height="2.400" stroke-width=".9"/><rect x="96.800" y="52.500" width="2.400" height="2.400" stroke-width=".9"/><rect x="101.200" y="52.500" width="2.400" height="2.400" stroke-width=".9"/>
 <path d="M120.500 45v-2.500h8.500l3.500 3.500v9.500h-2" /><path d="M118.500 44.500h8l3.500 3.500v9.500h-11.500z" fill="#f4f4f6"/><path d="M121 49h6.500M121 51.500h6.500M121 54h6.500" stroke-width="1"/>
 <rect x="139.200" y="39.600" width="24.800" height="22" stroke="#ee3535" stroke-width="2"/>
</svg>
<div class="a" style="left:37px;top:19px;width:15px;height:10px;font:8px/10px 'Liberation Sans',sans-serif;text-align:center;color:#444">lab</div>
<div class="a" style="left:172px;top:19px;width:15px;height:10px;font:8px/10px 'Liberation Sans',sans-serif;text-align:center;color:#666">123</div>
<div class="a" style="left:10px;top:41px;width:15px;height:9px;font:8px/9px 'Liberation Sans',sans-serif;text-align:center;color:#555">txt</div>
<svg class="a" style="left:144px;top:42px" width="15" height="16" viewBox="0 0 30 32" fill="none" stroke="#333" stroke-width="1.900"><path d="M18.200 1.800l6.200 6.300L8.500 23 1.700 24.400l1-7.200z"/><path d="M15 5l6.200 6.200" stroke-width="1.800"/><path d="M1.200 28.200c6-1 11-4 14.500-3.700 3.500.5 1.500 5 4.500 5.700 2.500.4 5-1.400 8-3.200"/></svg>
</div>
<!-- window border -->
<div class="a" style="left:1214px;top:1px;width:1px;height:753px;background:#fff;z-index:3"></div>
<div class="a" style="left:1px;top:55px;width:1px;height:699px;background:#fff;z-index:3"></div>
<div class="a" style="left:1px;top:753px;width:1214px;height:1px;background:#fff;z-index:3"></div>
<div class="a" style="z-index:4;left:0;top:0;width:1216px;height:755px;box-sizing:border-box;border:1px solid #6a6a6a;border-right-color:#5a5a5a;border-bottom-color:#5a5a5a;pointer-events:none"></div>
</body>
</html>
